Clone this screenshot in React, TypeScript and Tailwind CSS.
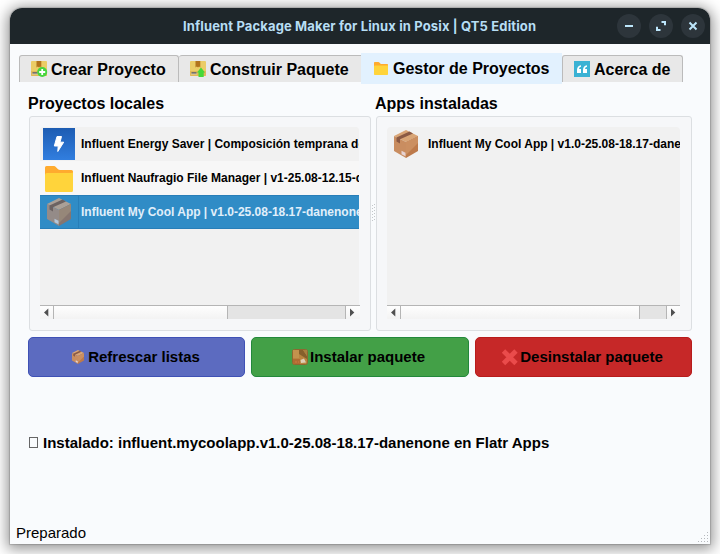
import React from "react";

function BoxIcon({ size, faded = false }: { size: number; faded?: boolean }) {
  return (
    <svg width={size} height={size} viewBox="0 0 32 32" className="shrink-0">
      <path d="M16 2 28 8 16 14 4 8Z" fill={faded ? "#aaa097" : "#d9a576"} />
      <path d="M4 8 16 14V30L4 23Z" fill={faded ? "#948b88" : "#c98d60"} />
      <path d="M28 8 16 14V30L28 23Z" fill={faded ? "#86756f" : "#bd7a4b"} />
      <path d="M16 14 28 8V15L16 27Z" fill={faded ? "#968779" : "#cb8f61"} />
      <path d="M6.5 9.5 19.5 3.6 23 5.4 10 11.3V15.5L6.5 13.5Z" fill={faded ? "#6b6262" : "#8b5a44"} />
      <path d="m11.5 22.7 4 2v3.5l-4-2Z" fill={faded ? "#b5c7da" : "#e7d3d2"} />
    </svg>
  );
}

function FolderIcon({ width, height }: { width: number; height: number }) {
  return (
    <svg width={width} height={height} viewBox="0 0 28 26" preserveAspectRatio="none" className="shrink-0">
      <path d="M0 1.5Q0 0 1.5 0H9q1 0 1.8 1L13 3.3Q14 4 15 4H26.5Q28 4 28 5.5V10H0Z" fill="#ffab2e" />
      <path d="M0 9Q0 7 2 7H26q2 0 2-1V24.5Q28 26 26.5 26h-25Q0 26 0 24.5Z" fill="#ffd43b" />
    </svg>
  );
}

function PackageIcon({ add = false }: { add?: boolean }) {
  return (
    <svg width="17" height="17" viewBox="0 0 17 17" className="shrink-0">
      <path d="M0 1Q0 0 1 0h14Q16 0 16 1v13q0 1-1 1H1Q0 15 0 14Z" fill="#ebcc66" />
      <path d="M0 10h16v4q0 1-1 1H1q-1 0-1-1Z" fill="#e0b958" />
      <path d="M5.5 0h4.8v6.5L9.1 5.5 8 6.5 6.8 5.5 5.5 6.5Z" fill="#b2731c" />
      <path d="M1.5 11h5v2h-5Z" fill="#777268" />
      <path d="M1 13h6" stroke="#ddd8c6" strokeWidth=".7" />
      {add ? (
        <>
          <circle cx="11.2" cy="11" r="5" fill="#46d63f" />
          <path d="M11.2 8v6M8.2 11h6" stroke="#fff" strokeWidth="1.8" />
        </>
      ) : (
        <path d="m11 6.5 4 5H13.7V16H8.5v-4.5H7Z" fill="#45d838" />
      )}
    </svg>
  );
}

function InstallIcon() {
  return (
    <svg width="16" height="16" viewBox="0 0 16 16" className="shrink-0">
      <rect x=".5" y=".5" width="15" height="15" rx="2" fill="#b9853f" stroke="#8f6730" />
      <path d="M1 1h6v8H1Z" fill="#c2924d" />
      <path d="M7 1h4l4 6v3L7 5Z" fill="#86602c" />
      <path d="M11 1h4v6Z" fill="#a88040" />
      <path d="M1 10h7v5H1Z" fill="#b06c33" />
      <path d="M8.5 11 12 9.5l2 4-5 .5Z" fill="#ded0b8" />
      <path d="M3 13h2M6 13h1" stroke="#d07a45" />
    </svg>
  );
}

function TitleButton({ children }: { children: React.ReactNode }) {
  return (
    <button className="flex size-6 items-center justify-center rounded-full bg-[#2d353b]">
      <svg width="12" height="12" viewBox="0 0 12 12" fill="none" stroke="#bde6fb" strokeWidth="2">{children}</svg>
    </button>
  );
}

function Arrow({ right = false }: { right?: boolean }) {
  return (
    <svg width="13" height="13" viewBox="0 0 13 13" className="shrink-0">
      <path d={right ? "M4 2.5V10.5L8.3 6.5Z" : "M8.3 2.5V10.5L4 6.5Z"} fill="#505050" />
    </svg>
  );
}

function Scrollbar({ thumb, track }: { thumb: string; track: string }) {
  return (
    <div className="flex h-[14px] border-t border-[#b5b5b5] bg-gradient-to-b from-[#fefefe] to-[#f3f3f3]">
      <Arrow />
      <div className={`${thumb} box-border h-full border-x border-[#b5b5b5]`} />
      <div className={`${track} box-border h-full border-r border-[#b5b5b5] bg-[#e4e4e4]`} />
      <Arrow right />
    </div>
  );
}

export default function App() {
  return (
    <div className="h-[554px] w-[720px] overflow-hidden bg-white px-[10px] pt-2 font-['Liberation_Sans',sans-serif] text-black">
      <div className="flex h-[536px] w-[700px] flex-col rounded-t-xl bg-[#f9fbfd] shadow-[0_0_1px_1px_rgba(0,0,0,0.15),0_2px_14px_3px_rgba(0,0,0,0.42)]">
        <header className="flex h-9 shrink-0 items-center rounded-t-xl bg-[#1e262a]">
          <div className="w-[173px]" />
          <h1 className="w-[434px] whitespace-nowrap pb-px font-['Inter',sans-serif] text-[13px] leading-4 font-bold tracking-[0.135px] text-[#b7def4]">Influent Package Maker for Linux in Posix | QT5 Edition</h1>
          <div className="flex gap-2">
            <TitleButton><path d="M2 6h8" /></TitleButton>
            <TitleButton><path d="M6.5 2H10v3.2M2 6.8V10h3.5" /></TitleButton>
            <TitleButton><path d="m2.5 2.5 7 7m0-7-7 7" /></TitleButton>
          </div>
        </header>

        <nav className="mt-[9px] ml-[9px] flex h-[31px] shrink-0 text-[16px] leading-[18px] font-bold whitespace-nowrap">
          <div className="mt-[2px] flex h-[27px] w-[160px] rounded-t-[3px] border border-b-0 border-[#bbb] bg-[#e8e8e8] pt-[5px] pl-[11px]"><PackageIcon add /><span className="ml-[3px]">Crear Proyecto</span></div>
          <div className="mt-[2px] flex h-[27px] w-[182px] rounded-tl-[3px] border-t border-[#bbb] bg-[#e8e8e8] pt-[5px] pl-[11px]"><PackageIcon /><span className="ml-[3px]">Construir Paquete</span></div>
          <div className="flex w-[201px] bg-[#e2f1fe] pt-[7px] pl-[13px]"><span className="pt-[2px]"><FolderIcon width={14} height={13} /></span><span className="ml-[5px]">Gestor de Proyectos</span></div>
          <div className="mt-[2px] flex h-[27px] w-[121px] rounded-t-[3px] border border-b-0 border-[#bbb] bg-[#e8e8e8] pt-[5px] pl-[11px]">
            <svg width="16" height="16" viewBox="0 0 16 16"><path d="M0 0h16v16H0Z" fill="#3ab2d4" /><path d="M7 4.2Q3 5 3 9v3h4V8H5q0-2 2-2.3ZM13 4.2Q9 5 9 9v3h4V8h-2q0-2 2-2.3Z" fill="#fff" /></svg>
            <span className="ml-[4px]">Acerca de</span>
          </div>
        </nav>

        <main className="flex h-[293px] shrink-0 flex-col px-[18px]">
          <div className="flex h-[32px] shrink-0 pt-[11px] text-[16px] leading-[18px] font-bold"><h2 className="w-[347px]">Proyectos locales</h2><h2>Apps instaladas</h2></div>
          <div className="flex h-[215px] shrink-0 pl-px">
            <section className="h-[215px] w-[342px] rounded-[3px] border border-[#dcdfe2] bg-[#f6f7f9] px-[10px] pt-[10px]">
              <div className="h-[178px] w-[319px] overflow-hidden rounded-t bg-[#f1f1f1] text-[12px] font-bold whitespace-nowrap">
                <div className="flex h-[34px] items-center bg-[#f1f1f1] pl-[3px]">
                  <svg width="32" height="32" viewBox="0 0 32 32" className="shrink-0"><defs><linearGradient id="energy" x2="0" y2="1"><stop stopColor="#1d5cb2" /><stop offset="1" stopColor="#317edf" /></linearGradient></defs><path d="M0 0h32v32H0Z" fill="url(#energy)" /><path d="M14 8.5h4.5L17 14.2h3.7L14.8 23.5 15.2 18H11.3Z" fill="#fff" stroke="#fff" strokeLinejoin="round" /></svg>
                  <span className="ml-[6px]">Influent Energy Saver | Composición temprana de energía</span>
                </div>
                <div className="flex h-[34px] items-center bg-[#f7f7f7] pt-px pl-[5px]"><FolderIcon width={28} height={26} /><span className="-mt-px ml-[8px]">Influent Naufragio File Manager | v1-25.08-12.15-danenone</span></div>
                <div className="flex h-[34px] border-y border-[#287eb8] bg-[#308cc6] text-[#e1effa]">
                  <div className="flex w-[38px] shrink-0 items-center pl-[3px]"><BoxIcon size={32} faded /></div>
                  <div className="flex flex-1 items-center border-l border-[#287eb8] pl-[2px]">Influent My Cool App | v1.0-25.08-18.17-danenone</div>
                </div>
              </div>
              <Scrollbar thumb="w-[175px]" track="w-[118px]" />
            </section>
            <div className="flex w-[5px] justify-center pt-[88px]"><svg width="3" height="17" viewBox="0 0 3 17"><path d="M.5 1v16M2.5 0v16" stroke="#c3c7ca" strokeDasharray="1 2" /></svg></div>
            <section className="h-[215px] w-[316px] rounded-[3px] border border-[#dcdfe2] bg-[#f6f7f9] px-[10px] pt-[10px]">
              <div className="h-[178px] w-[293px] overflow-hidden rounded-t bg-[#f1f1f1] text-[12px] font-bold whitespace-nowrap"><div className="flex h-[34px] items-center pl-[3px]"><BoxIcon size={32} /><span className="ml-[6px]">Influent My Cool App | v1.0-25.08-18.17-danenone</span></div></div>
              <div className="w-[293px]"><Scrollbar thumb="w-[240px]" track="w-[27px]" /></div>
            </section>
          </div>
          <div className="mt-[6px] flex h-10 shrink-0 gap-[6px] text-[15px] font-bold">
            <button className="flex w-[217px] items-center justify-center rounded-[5px] border border-[#3f51b5] bg-[#5c6bc0] pr-[3px]"><BoxIcon size={16} /><span className="ml-[2px]">Refrescar listas</span></button>
            <button className="flex w-[218px] items-center justify-center rounded-[5px] border border-[#23883b] bg-[#43a047] pr-[3px]"><InstallIcon /><span className="ml-[2px]">Instalar paquete</span></button>
            <button className="flex w-[217px] items-center justify-center rounded-[5px] border border-[#b71c1c] bg-[#c62828] pr-[3px]"><svg width="18" height="18" viewBox="0 0 18 18"><path d="m2.5 3 12.5 12.5M15 3 2.5 15.5" stroke="#ea4b4b" strokeWidth="4.8" /></svg><span className="ml-px">Desinstalar paquete</span></button>
          </div>
        </main>
        <div className="mt-[30px] ml-[18px] flex h-[71px] items-center text-[15px] leading-[17px] font-bold"><span className="mr-[5px] ml-px h-[11px] w-[9px] border border-[#666]" />Instalado: influent.mycoolapp.v1.0-25.08-18.17-danenone en Flatr Apps</div>
        <footer className="mt-auto flex h-[21px] items-center justify-between pl-[6px] text-[15px] leading-[17px]"><span className="-mt-[2px]">Preparado</span><svg width="12" height="12" viewBox="0 0 12 12" className="mt-[8px]"><path d="M9 0h1v1H9ZM6 3h1v1H6Zm3 0h1v1H9ZM3 6h1v1H3Zm3 0h1v1H6Zm3 0h1v1H9ZM0 9h1v1H0Zm3 0h1v1H3Zm3 0h1v1H6Zm3 0h1v1H9Z" fill="#b6b9bd" /></svg></footer>
      </div>
    </div>
  );
}
